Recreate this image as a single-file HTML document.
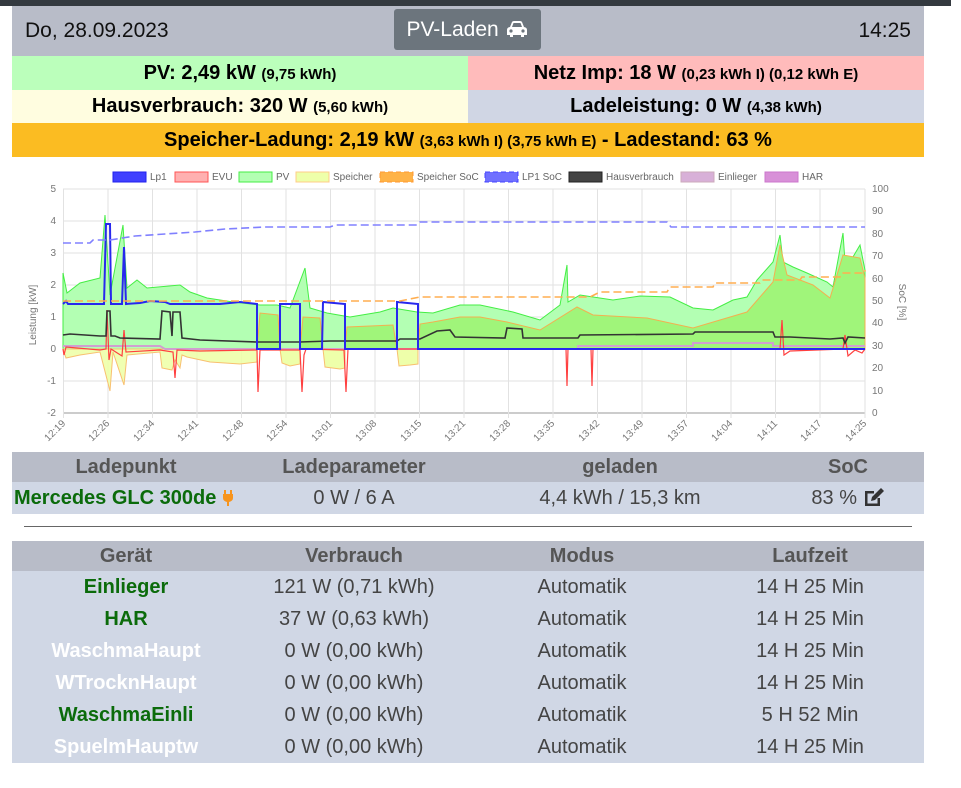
<!DOCTYPE html>
<html><head><meta charset="utf-8">
<style>
*{box-sizing:border-box;margin:0;padding:0}
body{width:961px;height:788px;background:#fff;font-family:"Liberation Sans",sans-serif;overflow:hidden;position:relative}
.top{position:absolute;left:0;top:0;width:951px;height:6px;background:#343a40}
.c{position:absolute;left:12px;width:912px}
.hdr{top:6px;height:50px;background:#b8bcc8;font-size:21px;color:#111}
.hdr .l{position:absolute;left:13px;top:13px}
.hdr .r{position:absolute;right:13px;top:13px}
.btn{position:absolute;left:382px;top:3px;width:147px;height:41px;background:#6c757d;border-radius:3px;color:#fff;font-size:21px;line-height:41px;text-align:center}
.row{height:34px;display:flex;font-weight:bold;font-size:20px;color:#000;line-height:34px;text-align:center}
.row div{flex:1}
.row small{font-size:15px}
table{border-collapse:collapse;width:912px;table-layout:fixed}
th{background:#b8bcc8;color:#555;font-size:20px;height:30px;font-weight:bold}
td{background:#d0d7e5;color:#444;font-size:20px;height:32px;text-align:center}
.g{color:#0b6b0b;font-weight:bold}
.w{color:#fff;font-weight:bold}
</style></head><body>
<div class="top"></div>
<div class="c hdr"><span class="l">Do, 28.09.2023</span>
<div class="btn">PV-Laden <svg width="24" height="18" viewBox="0 0 24 18" style="vertical-align:-2px"><path d="M5 7 L7 2 Q7.5 1 9 1 H15 Q16.5 1 17 2 L19 7 Q22 7.5 22 10 V15 H19 V17 H16 V15 H8 V17 H5 V15 H2 V10 Q2 7.5 5 7Z M7 7 H17 L15.5 3 H8.5Z" fill="#fff" fill-rule="evenodd"/><circle cx="6" cy="11" r="1.6" fill="#6c757d"/><circle cx="18" cy="11" r="1.6" fill="#6c757d"/></svg></div>
<span class="r">14:25</span></div>
<div class="c row" style="top:56px"><div style="background:#bbffbb">PV: 2,49 kW <small>(9,75 kWh)</small></div><div style="background:#ffbbbb">Netz Imp: 18 W <small>(0,23 kWh I) (0,12 kWh E)</small></div></div>
<div class="c row" style="top:90px;height:33px;line-height:33px"><div style="background:#fffde0">Hausverbrauch: 320 W <small>(5,60 kWh)</small></div><div style="background:#d0d6e4">Ladeleistung: 0 W <small>(4,38 kWh)</small></div></div>
<div class="c row" style="top:123px;background:#fbbc22"><div>Speicher-Ladung: 2,19 kW <small>(3,63 kWh I) (3,75 kWh E)</small> - Ladestand: 63 %</div></div>

<svg style="position:absolute;left:0;top:165px" width="961" height="280" viewBox="0 165 961 280" font-family="Liberation Sans,sans-serif" font-size="10" fill="#666">
<g font-size="10">
<rect x="113" y="172" width="33" height="10" fill="#4040ff" stroke="#2222ee"/><text x="150" y="180">Lp1</text>
<rect x="175" y="172" width="33" height="10" fill="#ffb0b0" stroke="#f55"/><text x="212" y="180">EVU</text>
<rect x="239" y="172" width="33" height="10" fill="#b3ffb3" stroke="#4e4"/><text x="276" y="180">PV</text>
<rect x="296" y="172" width="33" height="10" fill="#eeffaa" stroke="#fc8"/><text x="333" y="180">Speicher</text>
<rect x="380" y="172" width="33" height="10" fill="#ffb347" stroke="#f93" stroke-dasharray="5 3"/><text x="417" y="180">Speicher SoC</text>
<rect x="485" y="172" width="33" height="10" fill="#7070ff" stroke="#44f" stroke-dasharray="5 3"/><text x="522" y="180">LP1 SoC</text>
<rect x="569" y="172" width="33" height="10" fill="#444" stroke="#222"/><text x="606" y="180">Hausverbrauch</text>
<rect x="681" y="172" width="33" height="10" fill="#d8b0d8" stroke="#cab"/><text x="718" y="180">Einlieger</text>
<rect x="765" y="172" width="33" height="10" fill="#d890d8" stroke="#c7c"/><text x="802" y="180">HAR</text>
</g>
<g stroke="#e2e2e2" stroke-width="1">
<line x1="63" y1="189" x2="865" y2="189"/><line x1="63" y1="221" x2="865" y2="221"/><line x1="63" y1="253" x2="865" y2="253"/><line x1="63" y1="285" x2="865" y2="285"/><line x1="63" y1="317" x2="865" y2="317"/><line x1="63" y1="349" x2="865" y2="349"/><line x1="63" y1="381" x2="865" y2="381"/><line x1="63" y1="413" x2="865" y2="413" stroke="#ccc" stroke-width="2"/>
<line x1="63.5" y1="189" x2="63.5" y2="418"/><line x1="108" y1="189" x2="108" y2="418"/><line x1="152.5" y1="189" x2="152.5" y2="418"/><line x1="197" y1="189" x2="197" y2="418"/><line x1="241.5" y1="189" x2="241.5" y2="418"/><line x1="286" y1="189" x2="286" y2="418"/><line x1="330.5" y1="189" x2="330.5" y2="418"/><line x1="375" y1="189" x2="375" y2="418"/><line x1="419.5" y1="189" x2="419.5" y2="418"/><line x1="464" y1="189" x2="464" y2="418"/><line x1="508.5" y1="189" x2="508.5" y2="418"/><line x1="553" y1="189" x2="553" y2="418"/><line x1="597.5" y1="189" x2="597.5" y2="418"/><line x1="642" y1="189" x2="642" y2="418"/><line x1="686.5" y1="189" x2="686.5" y2="418"/><line x1="731" y1="189" x2="731" y2="418"/><line x1="775.5" y1="189" x2="775.5" y2="418"/><line x1="820" y1="189" x2="820" y2="418"/><line x1="865" y1="189" x2="865" y2="418"/>
</g>
<polygon fill="#b3ffb3" stroke="#44ee44" stroke-width="1" points="63,349 63,273 67,293 80,283 100,278 105,215 110,295 123,225 127,288 137,280 147,288 180,285 190,292 207,298 233,302 260,305 277,305 290,308 305,268 310,308 327,313 350,317 380,312 393,308 417,312 433,313 460,305 480,305 513,312 540,320 560,305 567,265 568,302 580,295 613,300 640,296 670,297 693,308 713,310 733,300 747,297 757,280 773,262 780,235 783,262 793,267 807,273 827,282 833,287 843,233 845,262 850,262 860,245 865,270 865,349"/>
<polygon fill="#eeffaa" fill-opacity="0.9" stroke="#f8c070" stroke-width="1" points="63,349 66,358 80,355 100,352 110,391 113,352 124,385 127,355 160,352 162,368 172,370 175,360 180,368 182,355 187,357 210,362 240,364 257,362 257,349"/>
<polygon fill="#eeffaa" stroke="#f8c070" points="280,349 282,363 290,366 300,364 300,349"/>
<polygon fill="#eeffaa" stroke="#f8c070" points="323,349 325,367 340,369 345,368 345,349"/>
<polygon fill="#eeffaa" stroke="#f8c070" points="397,349 399,366 410,365 418,364 418,349"/>
<polygon fill="#a0f57a" stroke="#f3b050" stroke-width="1" points="257,349 260,313 278,315 280,349 300,349 303,317 320,318 323,349 345,349 347,327 393,325 397,349 418,349 420,324 433,322 460,317 480,317 507,322 540,330 577,307 593,315 647,318 693,328 747,312 773,282 780,245 787,275 813,285 830,298 843,255 860,258 865,278 865,349"/>
<polyline fill="none" stroke="#d0a0d0" stroke-width="2" points="63,346 160,346 165,349 578,349 578,346 693,346 693,343 773,343 773,346 865,346"/>
<polyline fill="none" stroke="#ff4040" stroke-width="1.2" points="63,349 64,355 66,347 100,350 106,349 107,310 109,360 111,349 122,356 124,330 126,352 160,350 173,352 175,378 177,350 200,351 257,350 258,392 260,350 300,350 302,392 304,355 306,349 344,350 346,392 348,349 566,349 567,386 568,349 591,349 592,386 593,349 780,349 782,320 784,355 790,351 843,349 845,335 848,356 855,350 862,353 865,349"/>
<polyline fill="none" stroke="#333" stroke-width="1.6" points="63,335 70,334 100,336 106,336 107,311 110,311 111,336 115,336 120,338 160,339 162,311 170,312 172,336 173,312 180,312 182,338 200,340 257,342 300,342 330,341 360,341 397,341 400,339 420,339 437,331 450,330 455,337 505,338 507,328 522,329 523,338 578,338 580,335 693,334 695,332 773,332 775,337 790,337 830,339 843,338 845,343 848,337 865,338"/>
<polyline fill="none" stroke="#2828ee" stroke-width="2" points="63,304 66,301 68,304 104,304 106,224 110,224 111,304 122,304 124,247 126,304 140,303 150,301 165,302 170,304 220,304 240,302 257,304 257,349 280,349 280,304 300,304 300,349 322,349 323,302 345,304 345,349 397,349 397,302 418,304 418,349 865,349"/>
<polyline fill="none" stroke="#8080ff" stroke-width="1.6" stroke-dasharray="8 4" points="63,243 90,243 93,240 110,240 135,236 165,234 195,232 225,229 265,227 330,227 335,225 417,225 420,222 667,222 671,227 865,227"/>
<polyline fill="none" stroke="#ffae50" stroke-width="1.6" stroke-dasharray="8 4" points="63,301 400,301 420,297 590,297 600,292 667,292 670,287 713,287 715,283 760,283 762,280 800,280 802,277 840,277 842,273 865,273 865,270"/>
<g text-anchor="end" fill="#777"><text x="56" y="192">5</text><text x="56" y="224">4</text><text x="56" y="256">3</text><text x="56" y="288">2</text><text x="56" y="320">1</text><text x="56" y="352">0</text><text x="56" y="384">-1</text><text x="56" y="416">-2</text></g>
<g fill="#777"><text x="872" y="192">100</text><text x="872" y="214">90</text><text x="872" y="237">80</text><text x="872" y="259">70</text><text x="872" y="282">60</text><text x="872" y="304">50</text><text x="872" y="326">40</text><text x="872" y="349">30</text><text x="872" y="371">20</text><text x="872" y="394">10</text><text x="872" y="416">0</text></g>
<text transform="translate(36,315) rotate(-90)" text-anchor="middle" fill="#777">Leistung [kW]</text>
<text transform="translate(899,302) rotate(90)" text-anchor="middle" fill="#777">SoC [%]</text>
<g fill="#777" text-anchor="end" font-size="10">
<text transform="translate(66,424) rotate(-45)">12:19</text><text transform="translate(110,424) rotate(-45)">12:26</text><text transform="translate(155,424) rotate(-45)">12:34</text><text transform="translate(199,424) rotate(-45)">12:41</text><text transform="translate(244,424) rotate(-45)">12:48</text><text transform="translate(288,424) rotate(-45)">12:54</text><text transform="translate(333,424) rotate(-45)">13:01</text><text transform="translate(377,424) rotate(-45)">13:08</text><text transform="translate(422,424) rotate(-45)">13:15</text><text transform="translate(466,424) rotate(-45)">13:21</text><text transform="translate(511,424) rotate(-45)">13:28</text><text transform="translate(555,424) rotate(-45)">13:35</text><text transform="translate(600,424) rotate(-45)">13:42</text><text transform="translate(644,424) rotate(-45)">13:49</text><text transform="translate(689,424) rotate(-45)">13:57</text><text transform="translate(733,424) rotate(-45)">14:04</text><text transform="translate(778,424) rotate(-45)">14:11</text><text transform="translate(822,424) rotate(-45)">14:17</text><text transform="translate(867,424) rotate(-45)">14:25</text>
</g>
</svg>

<table class="c" style="top:452px">
<colgroup><col style="width:228px"><col style="width:228px"><col style="width:304px"><col style="width:152px"></colgroup>
<tr><th>Ladepunkt</th><th>Ladeparameter</th><th>geladen</th><th>SoC</th></tr>
<tr><td class="g" style="text-align:left;padding-left:2px;font-size:20px;white-space:nowrap">Mercedes GLC 300de <svg width="12" height="16" viewBox="0 0 12 16" style="vertical-align:-2px"><path d="M3 0V4M9 0V4" stroke="#f7941d" stroke-width="2"/><path d="M1 4H11V8Q11 11 7 12V16H5V12Q1 11 1 8Z" fill="#f7941d"/></svg></td><td>0 W / 6 A</td><td>4,4 kWh / 15,3 km</td><td>83 % <svg width="22" height="20" viewBox="0 0 22 20" style="vertical-align:-3px"><path d="M2 4H11V6.5H4.5V16.5H14.5V11H17V19H2Z" fill="#333"/><path d="M8 14L9 10L18 1L21 4L12 13Z" fill="#333"/></svg></td></tr>
</table>
<div style="position:absolute;left:24px;top:526px;width:888px;height:1px;background:#666"></div>
<table class="c" style="top:541px">
<tr><th>Gerät</th><th>Verbrauch</th><th>Modus</th><th>Laufzeit</th></tr>
<tr><td class="g">Einlieger</td><td>121 W (0,71 kWh)</td><td>Automatik</td><td>14 H 25 Min</td></tr>
<tr><td class="g">HAR</td><td>37 W (0,63 kWh)</td><td>Automatik</td><td>14 H 25 Min</td></tr>
<tr><td class="w">WaschmaHaupt</td><td>0 W (0,00 kWh)</td><td>Automatik</td><td>14 H 25 Min</td></tr>
<tr><td class="w">WTrocknHaupt</td><td>0 W (0,00 kWh)</td><td>Automatik</td><td>14 H 25 Min</td></tr>
<tr><td class="g">WaschmaEinli</td><td>0 W (0,00 kWh)</td><td>Automatik</td><td>5 H 52 Min</td></tr>
<tr><td class="w">SpuelmHauptw</td><td>0 W (0,00 kWh)</td><td>Automatik</td><td>14 H 25 Min</td></tr>
</table>
</body></html>
